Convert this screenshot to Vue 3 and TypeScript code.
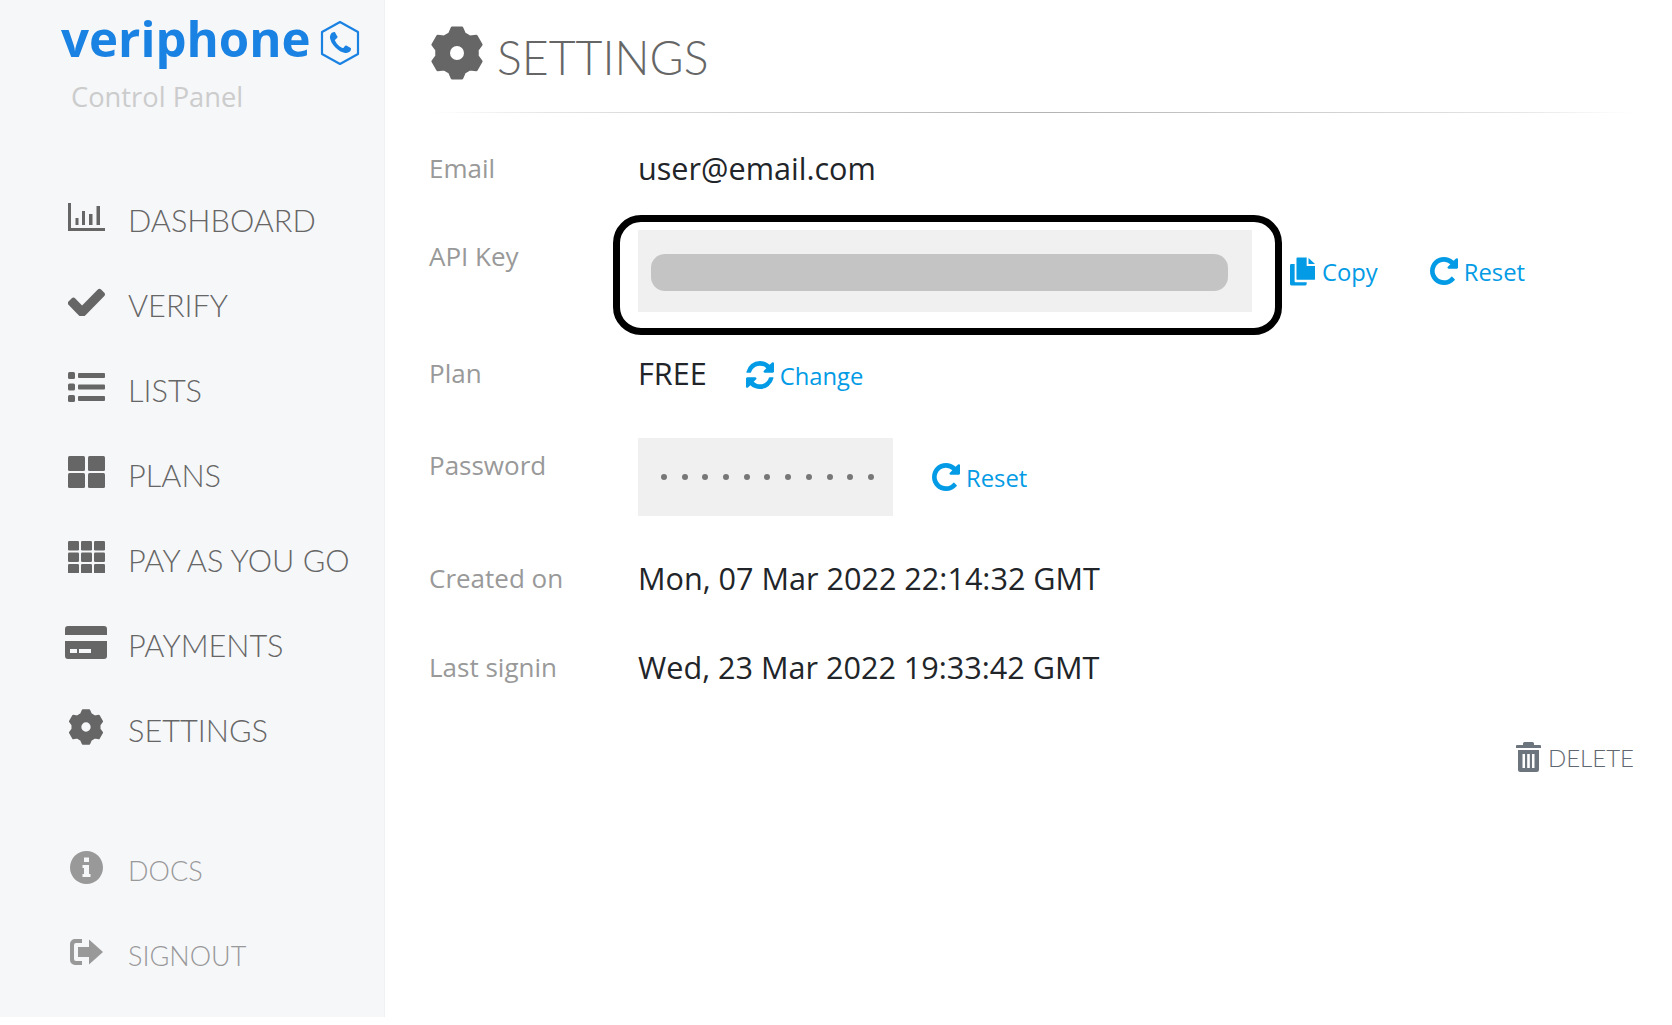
<script setup lang="ts">
interface NavItem {
  label: string
  icon: string
}

const navItems: NavItem[] = [
  { label: 'DASHBOARD', icon: 'chart' },
  { label: 'VERIFY', icon: 'check' },
  { label: 'LISTS', icon: 'list' },
  { label: 'PLANS', icon: 'large' },
  { label: 'PAY AS YOU GO', icon: 'grid' },
  { label: 'PAYMENTS', icon: 'card' },
  { label: 'SETTINGS', icon: 'cog' }
]

const bottomItems: NavItem[] = [
  { label: 'DOCS', icon: 'info' },
  { label: 'SIGNOUT', icon: 'signout' }
]

// six toothed gear, the tips get rounded by a stroke in the css
const buildGear = (): string => {
  const point = (radius: number, deg: number) => {
    const rad = (deg * Math.PI) / 180
    return `${(radius * Math.cos(rad)).toFixed(2)} ${(radius * Math.sin(rad)).toFixed(2)}`
  }
  const parts: string[] = []
  for (let k = 0; k < 6; k++) {
    const a = -90 + k * 60
    parts.push(`${k === 0 ? 'M' : 'L'}${point(20.5, a - 21)}`)
    parts.push(`L${point(25.5, a - 11)}`)
    parts.push(`L${point(25.5, a + 11)}`)
    parts.push(`L${point(20.5, a + 21)}`)
  }
  return `${parts.join(' ')} Z M8.500 0 A8.500 8.500 0 1 0 -8.500 0 A8.500 8.500 0 1 0 8.500 0 Z`
}

const cogPath = buildGear()
const repeatPath = 'M1664 256v448q0 26-19 45t-45 19h-448q-42 0-59-40-17-39 14-69l138-138q-148-137-349-137-104 0-198.5 40.5t-163.5 109.5-109.5 163.5-40.5 198.5 40.5 198.5 109.5 163.5 163.5 109.5 198.5 40.5q119 0 225-52t179-147q7-10 23-12 15 0 25 9l137 138q9 8 9.5 20.5t-7.5 22.5q-109 132-264 204.5t-327 72.5q-156 0-298-61t-245-164-164-245-61-298 61-298 164-245 245-164 298-61q147 0 284.5 55.5t244.5 156.5l130-129q29-31 70-14 39 17 39 59z'
const refreshPath = 'M1639 1056q0 5-1 7-64 268-268 434.5t-478 166.5q-146 0-282.5-55t-243.5-157l-129 129q-19 19-45 19t-45-19-19-45v-448q0-26 19-45t45-19h448q26 0 45 19t19 45-19 45l-137 137q71 66 161 102t187 36q134 0 250-65t186-179q11-17 53-117 8-23 30-23h192q13 0 22.5 9.5t9.5 22.5zm25-800v448q0 26-19 45t-45 19h-448q-26 0-45-19t-19-45 19-45l138-138q-148-137-349-137-134 0-250 65t-186 179q-11 17-53 117-8 23-30 23h-199q-13 0-22.5-9.5t-9.5-22.5v-7q65-268 270-434.5t480-166.5q146 0 284 55.5t245 156.5l130-129q19-19 45-19t45 19 19 45z'
const checkPath = 'M1671 566q0 40-28 68l-724 724-136 136q-28 28-68 28t-68-28l-136-136-362-362q-28-28-28-68t28-68l136-136q28-28 68-28t68 28l294 295 656-657q28-28 68-28t68 28l136 136q28 28 28 68z'
const phonePath = 'M1600 1240q0 27-10 70.500t-21 68.500q-21 50-122 106-94 51-186 51-27 0-53-3.500t-57.500-12.500-47-14.500-55.500-20.500-49-18q-98-35-175-83-127-79-264-216t-216-264q-48-77-83-175-3-9-18-49t-20.500-55.500-14.500-47-12.500-57.500-3.500-53q0-92 51-186 56-101 106-122 25-11 68.500-21t70.500-10q14 0 21 3 18 6 53 76 11 19 30 54t35 63.500 31 53.500q3 4 17.500 25t21.500 35.500 7 28.500q0 20-28.500 50t-62 55-62 53-28.500 46q0 9 5 22.500t8.500 20.500 14 24 11.500 19q76 137 174 235t235 174q2 1 19 11.500t24 14 20.500 8.500 22.500 5q18 0 46-28.500t53-62 55-62 50-28.500q14 0 28.500 7t35.500 21.500 25 17.500q25 15 53.500 31t63.500 35 54 30q70 35 76 53 3 7 3 21z'
</script>

<template>
  <div class="page">
    <aside class="sidebar">
      <div class="brand">
        <span class="brand-name">veriphone</span>
        <svg class="brand-mark" viewBox="0 0 40 46">
          <path d="M20 2 L38 12 V34 L20 44 L2 34 V12 Z" fill="none" stroke="#1a82e2" stroke-width="2.2" stroke-linejoin="round" />
          <svg x="9" y="12" width="22" height="22" viewBox="128 128 1472 1472"><path :d="phonePath" fill="#1a82e2" /></svg>
        </svg>
      </div>
      <div class="brand-sub">Control Panel</div>

      <nav class="nav">
        <a v-for="item in navItems" :key="item.label" class="nav-item">
          <span class="nav-icon">
            <svg v-if="item.icon === 'chart'" width="37" height="28" viewBox="0 0 37 28">
              <rect x="0" y="0" width="3" height="28" />
              <rect x="0" y="25" width="37" height="3" />
              <rect x="7.500" y="15" width="3" height="7" />
              <rect x="14" y="8" width="3" height="14" />
              <rect x="21" y="11" width="3.500" height="11" />
              <rect x="28.500" y="3" width="3.500" height="19" />
            </svg>
            <svg v-else-if="item.icon === 'check'" width="37" height="28" viewBox="128 305 1543 1150" preserveAspectRatio="none"><path :d="checkPath" /></svg>
            <svg v-else-if="item.icon === 'list'" width="37" height="30" viewBox="0 0 37 30">
              <rect x="0" y="0" width="7" height="7" rx="1.500" />
              <rect x="10" y="1" width="27" height="5" rx="1" />
              <rect x="0" y="11.500" width="7" height="7" rx="1.500" />
              <rect x="10" y="12.500" width="27" height="5" rx="1" />
              <rect x="0" y="23" width="7" height="7" rx="1.500" />
              <rect x="10" y="24" width="27" height="5" rx="1" />
            </svg>
            <svg v-else-if="item.icon === 'large'" width="37" height="32" viewBox="0 0 37 32">
              <rect x="0" y="0" width="17" height="15" rx="1.500" />
              <rect x="20" y="0" width="17" height="15" rx="1.500" />
              <rect x="0" y="17" width="17" height="15" rx="1.500" />
              <rect x="20" y="17" width="17" height="15" rx="1.500" />
            </svg>
            <svg v-else-if="item.icon === 'grid'" width="37" height="32" viewBox="0 0 37 32">
              <template v-for="row in 3" :key="row">
                <rect v-for="col in 3" :key="col" :x="(col - 1) * 13" :y="(row - 1) * 11.500" width="11" height="9.500" rx="1.200" />
              </template>
            </svg>
            <svg v-else-if="item.icon === 'card'" width="42" height="33" viewBox="0 0 42 33">
              <path d="M3 0h36a3 3 0 0 1 3 3v6H0V3a3 3 0 0 1 3-3z" />
              <path fill-rule="evenodd" d="M0 15h42v15a3 3 0 0 1-3 3H3a3 3 0 0 1-3-3zM5 23v4h7v-4zM14 23v4h12v-4z" />
            </svg>
            <svg v-else-if="item.icon === 'cog'" class="cog-small" viewBox="-27 -27 54 54"><path :d="cogPath" /></svg>
          </span>
          <span class="nav-label">{{ item.label }}</span>
        </a>
      </nav>

      <nav class="nav nav-bottom">
        <a v-for="item in bottomItems" :key="item.label" class="nav-item is-muted">
          <span class="nav-icon">
            <svg v-if="item.icon === 'info'" width="33" height="33" viewBox="0 0 33 33">
              <path fill-rule="evenodd" d="M16.500 0a16.500 16.500 0 1 1 0 33 16.500 16.500 0 0 1 0-33zM14 6.500v4.500h5V6.500zM12.500 14v3H14v6h-1.500v3h8v-3H19v-9z" />
            </svg>
            <svg v-else width="33" height="26" viewBox="0 0 33 26">
              <path d="M12 0v4H6a2 2 0 0 0-2 2v14a2 2 0 0 0 2 2h6v4H5a5 5 0 0 1-5-5V5a5 5 0 0 1 5-5z" />
              <path d="M19 0.500 33 13 19 25.500V18H8V8h11z" />
            </svg>
          </span>
          <span class="nav-label">{{ item.label }}</span>
        </a>
      </nav>
    </aside>

    <main class="content">
      <header class="title">
        <svg class="title-icon" viewBox="-27 -27 54 54"><path :d="cogPath" /></svg>
        <h1>SETTINGS</h1>
      </header>
      <div class="divider"></div>

      <div class="row row-email">
        <div class="label">Email</div>
        <div class="value">user@email.com</div>
      </div>

      <div class="row row-key">
        <div class="label">API Key</div>
        <div class="key-wrap">
          <div class="key-field"><div class="key-blur"></div></div>
          <div class="key-outline"></div>
        </div>
        <a class="link link-copy">
          <svg class="link-icon copy-icon" viewBox="0 0 27 30">
            <path d="M5 7v18.500a1 1 0 0 0 1 1H18v2a1.500 1.500 0 0 1-1.500 1.500H1.500A1.500 1.500 0 0 1 0 28.500V8.500A1.500 1.500 0 0 1 1.500 7z" />
            <path d="M7 1a1 1 0 0 1 1-1h10v9h9v14a1 1 0 0 1-1 1H8a1 1 0 0 1-1-1z" />
            <path d="M20 0.500 27 7h-7z" />
          </svg>Copy
        </a>
        <a class="link link-reset">
          <svg class="link-icon" viewBox="128 128 1536 1536"><path :d="repeatPath" /></svg>Reset
        </a>
      </div>

      <div class="row row-plan">
        <div class="label">Plan</div>
        <div class="value">FREE</div>
        <a class="link link-change">
          <svg class="link-icon" viewBox="128 128 1536 1536"><path :d="refreshPath" /></svg>Change
        </a>
      </div>

      <div class="row row-password">
        <div class="label">Password</div>
        <div class="pass-field">
          <span v-for="n in 11" :key="n" class="pass-dot"></span>
        </div>
        <a class="link link-pass">
          <svg class="link-icon" viewBox="128 128 1536 1536"><path :d="repeatPath" /></svg>Reset
        </a>
      </div>

      <div class="row row-created">
        <div class="label">Created on</div>
        <div class="value">Mon, 07 Mar 2022 22:14:32 GMT</div>
      </div>

      <div class="row row-signin">
        <div class="label">Last signin</div>
        <div class="value">Wed, 23 Mar 2022 19:33:42 GMT</div>
      </div>

      <div class="delete-row">
        <a class="delete">
          <svg class="delete-icon" viewBox="0 0 25 30">
            <path d="M8.500 0h8a1.500 1.500 0 0 1 1.500 1.500V3h6a1 1 0 0 1 1 1v2H0V4a1 1 0 0 1 1-1h6V1.500A1.500 1.500 0 0 1 8.500 0z" />
            <path fill-rule="evenodd" d="M2 8h21v19.500a2.500 2.500 0 0 1-2.500 2.500h-16A2.500 2.500 0 0 1 2 27.500zM6.500 12v14h2.500V12zM11.200 12v14h2.600V12zM16 12v14h2.500V12z" />
          </svg>DELETE
        </a>
      </div>
    </main>
  </div>
</template>

<style>
html,
body {
  margin: 0;
  background: #fff;
}
</style>

<style scoped>
.page {
  display: flex;
  height: 1017px;
  font-family: "Open Sans", "Liberation Sans", sans-serif;
}

.sidebar {
  box-sizing: border-box;
  width: 385px;
  flex: none;
  background: #f6f7f9;
  border-right: 1px solid #eff1f4;
  padding-top: 7px;
}

.brand {
  display: flex;
  align-items: center;
  padding-left: 61px;
  height: 66px;
}

.brand-name {
  font-weight: 700;
  font-size: 49.200px;
  line-height: 66px;
  color: #1a82e2;
  margin-bottom: 4px;
}

.brand-mark {
  width: 40px;
  height: 46px;
  margin-left: 9px;
  margin-top: 6px;
}

.brand-sub {
  padding-left: 71px;
  margin-top: 8px;
  font-size: 27.300px;
  line-height: 32px;
  color: #ccc;
}

.nav {
  display: flex;
  flex-direction: column;
  margin-top: 65px;
}

.nav-bottom {
  margin-top: 55px;
}

.nav-item {
  display: flex;
  align-items: center;
  height: 85px;
  color: #666;
}

.nav-item.is-muted {
  color: #999;
}

.nav-item.is-muted .nav-label {
  font-size: 27px;
}

.nav-icon {
  display: flex;
  justify-content: center;
  align-items: center;
  width: 42px;
  margin-left: 65px;
  margin-right: 21px;
  margin-bottom: 7px;
}

.nav-icon svg {
  display: block;
  fill: currentColor;
}

.nav-icon .cog-small {
  width: 36px;
  height: 36px;
  stroke: currentColor;
  stroke-width: 3;
  stroke-linejoin: round;
}

.nav-label {
  font-family: Lato, "Open Sans", sans-serif;
  font-weight: 300;
  font-size: 30.700px;
  line-height: 40px;
  white-space: nowrap;
}

.content {
  flex: 1;
  min-width: 0;
  padding: 0 38px 0 44px;
}

.title {
  display: flex;
  align-items: center;
  height: 112px;
  color: #666;
}

.title-icon {
  width: 54px;
  height: 54px;
  fill: #666;
  stroke: #666;
  stroke-width: 3;
  stroke-linejoin: round;
  margin-right: 13px;
  margin-left: 1px;
  margin-bottom: 6px;
}

.title h1 {
  margin: 0;
  padding-top: 2px;
  font-family: Lato, "Open Sans", sans-serif;
  font-weight: 300;
  font-size: 46.400px;
  color: #666;
}

.divider {
  height: 1px;
  background: linear-gradient(to right, rgba(0, 0, 0, 0), rgba(0, 0, 0, 0.1) 10%, rgba(0, 0, 0, 0.3) 50%, rgba(0, 0, 0, 0.1) 90%, rgba(0, 0, 0, 0));
}

.row {
  display: flex;
  align-items: center;
}

.label {
  width: 209px;
  flex: none;
  font-size: 26px;
  line-height: 36px;
  color: #999;
}

.value {
  font-size: 30.600px;
  line-height: 40px;
  color: #212529;
}

.link {
  display: flex;
  align-items: center;
  font-size: 23.800px;
  line-height: 36px;
  color: #039be5;
}

.link-icon {
  width: 28px;
  height: 28px;
  fill: #039be5;
  margin-right: 6px;
  margin-bottom: 2px;
}

.row-email {
  margin-top: 35px;
  height: 40px;
}

.row-key {
  margin-top: 42px;
  align-items: flex-start;
}

.row-key .label {
  margin-top: 8px;
}

.key-wrap {
  position: relative;
}

.key-field {
  box-sizing: border-box;
  width: 614px;
  height: 82px;
  padding: 24px 24px 0 13px;
  background: #f0f0f0;
}

.key-blur {
  height: 37px;
  border-radius: 14px;
  background: #c4c4c4;
}

.key-outline {
  position: absolute;
  left: -25px;
  top: -15px;
  right: -30px;
  bottom: -23px;
  border: 7px solid #000;
  border-radius: 28px;
}

.link-copy {
  margin: 24px 0 0 38px;
}

.copy-icon {
  width: 25px;
  height: 29px;
  margin-right: 7px;
}

.link-reset {
  margin: 24px 0 0 52px;
}

.row-plan {
  margin-top: 41px;
  height: 40px;
}

.link-change {
  margin-left: 39px;
  margin-top: 6px;
}

.row-password {
  margin-top: 45px;
  align-items: flex-start;
}

.row-password .label {
  margin-top: 9px;
}

.pass-field {
  display: flex;
  align-items: center;
  justify-content: space-between;
  box-sizing: border-box;
  width: 255px;
  height: 78px;
  padding: 0 19px 0 23px;
  background: #f0f0f0;
}

.pass-dot {
  width: 6px;
  height: 6px;
  border-radius: 50%;
  background: #777;
}

.link-pass {
  margin: 22px 0 0 39px;
}

.row-created {
  margin-top: 42px;
  height: 40px;
}

.row-signin {
  margin-top: 49px;
  height: 40px;
}

.delete-row {
  display: flex;
  justify-content: flex-end;
  margin-top: 55px;
}

.delete {
  display: flex;
  align-items: center;
  font-family: Lato, "Open Sans", sans-serif;
  font-weight: 300;
  font-size: 24px;
  color: #5f6870;
}

.delete-icon {
  width: 25px;
  height: 30px;
  fill: #6c757d;
  margin-right: 7px;
}
</style>
